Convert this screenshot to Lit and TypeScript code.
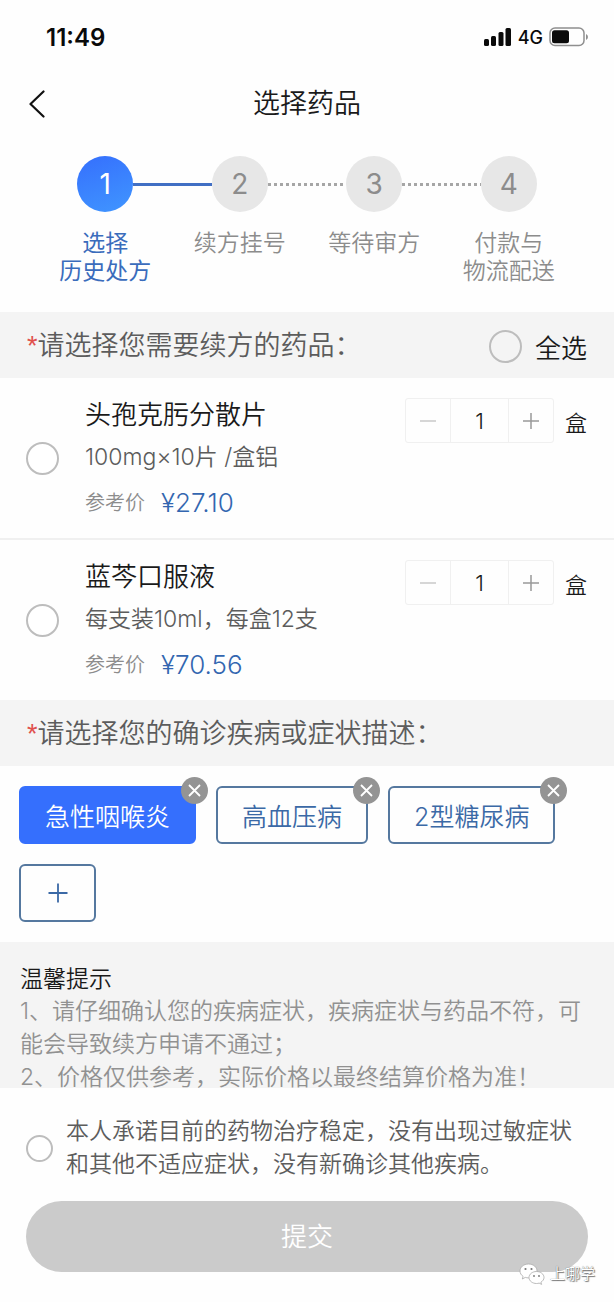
import { LitElement, html, css, nothing } from "lit";
import { customElement, property, state } from "lit/decorators.js";
import { classMap } from "lit/directives/class-map.js";

interface Drug {
  name: string;
  spec: string;
  price: string;
  count: number;
  checked: boolean;
}

const shared = css`
  * {
    box-sizing: border-box;
  }
  button,
  input {
    font: inherit;
    color: inherit;
    margin: 0;
    padding: 0;
    border: 0;
    background: none;
  }
  button {
    cursor: pointer;
  }
  .round {
    appearance: none;
    flex: none;
    width: 33px;
    height: 33px;
    border: 2px solid #bdbdbd;
    border-radius: 50%;
    background: #fff;
  }
  .round:checked {
    border-color: #356ffd;
    background: radial-gradient(#356ffd 50%, #fff 54%);
  }
`;

@customElement("status-bar")
export class StatusBar extends LitElement {
  static styles = css`
    :host {
      display: flex;
      align-items: center;
      justify-content: space-between;
      height: 74px;
      padding: 0 25px 0 46px;
      color: #0a0a0a;
    }
    .time {
      font-size: 24px;
      font-weight: 600;
    }
    .right {
      display: flex;
      align-items: center;
      gap: 6px;
      font-size: 18px;
      font-weight: 500;
    }
    svg {
      display: block;
    }
  `;

  render() {
    return html`
      <span class="time">11:49</span>
      <span class="right">
        <svg width="29" height="20" viewBox="0 0 29 20" fill="#0a0a0a" aria-hidden="true">
          <rect x="1" y="12" width="5" height="7" rx="1.500" />
          <rect x="8" y="9" width="5" height="10" rx="1.500" />
          <rect x="15.500" y="5" width="5" height="14" rx="1.500" />
          <rect x="22.500" y="1" width="5.500" height="18" rx="1.500" />
        </svg>
        <span>4G</span>
        <svg width="40" height="20" viewBox="0 0 40 20" aria-hidden="true">
          <rect x="1" y="1" width="34" height="17.500" rx="5" fill="none" stroke="#8f8f8f" stroke-width="1.500" />
          <rect x="3" y="3.200" width="17" height="13" rx="2.500" fill="#0a0a0a" />
          <path d="M37 7v6q2-1 2-3t-2-3z" fill="#8f8f8f" />
        </svg>
      </span>
    `;
  }
}

@customElement("step-bar")
export class StepBar extends LitElement {
  static styles = css`
    .steps {
      display: flex;
      list-style: none;
      margin: 0;
      padding: 22px 38px 27px;
    }
    .step {
      flex: 1;
      min-width: 0;
      color: #8c8c8c;
    }
    .head {
      display: grid;
      grid-template-columns: 1fr 56px 1fr;
      align-items: center;
    }
    .dot {
      grid-column: 2;
      display: grid;
      place-items: center;
      height: 56px;
      border-radius: 50%;
      background: #e7e7e7;
      font-size: 28px;
      font-weight: 400;
    }
    .line {
      width: 200%;
      height: 3px;
      background: repeating-linear-gradient(90deg, #a6a6a6 0 3px, transparent 3px 6px);
    }
    .label {
      margin-top: 17px;
      font-size: 23px;
      line-height: 28px;
      text-align: center;
      white-space: pre-line;
    }
    .active {
      color: #3a6cbc;
    }
    .active .label {
      font-weight: 400;
    }
    .active .dot {
      background: linear-gradient(160deg, #356ffd, #4096ff);
      color: #fff;
    }
    .active .line {
      background: #416fc4;
    }
  `;

  private labels = ["选择\n历史处方", "续方挂号", "等待审方", "付款与\n物流配送"];

  render() {
    return html`<ol class="steps">
      ${this.labels.map(
        (label, i) => html`<li class=${classMap({ step: true, active: i === 0 })}>
          <div class="head">
            <span class="dot">${i + 1}</span>
            ${i < this.labels.length - 1 ? html`<span class="line"></span>` : nothing}
          </div>
          <div class="label">${label}</div>
        </li>`
      )}
    </ol>`;
  }
}

@customElement("drug-item")
export class DrugItem extends LitElement {
  static styles = [
    shared,
    css`
      :host {
        display: flex;
        align-items: center;
        gap: 26px;
        padding: 19px 27px 19px 26px;
      }
      .info {
        flex: 1;
        min-width: 0;
      }
      .name {
        display: block;
        font-size: 26px;
        line-height: 36px;
        color: #1a1a1a;
      }
      .spec {
        margin-top: 8px;
        font-size: 23px;
        line-height: 32px;
        color: #5c5c5c;
      }
      .price {
        display: flex;
        align-items: center;
        gap: 16px;
        margin-top: 14px;
        line-height: 32px;
        font-size: 20px;
        color: #8c8c8c;
      }
      .amount {
        font-size: 26px;
        color: #3366b0;
      }
      .quantity {
        align-self: flex-start;
        display: flex;
        align-items: center;
        gap: 11px;
        margin-top: 1px;
        font-size: 22px;
        color: #1a1a1a;
      }
      .stepper {
        display: grid;
        grid-template-columns: 44px 59px 44px;
        height: 45px;
        border: 1px solid #f0f0f0;
        border-radius: 3px;
      }
      .stepper button {
        display: grid;
        place-items: center;
        color: #999;
      }
      .stepper button:disabled {
        color: #c8c8c8;
      }
      .count {
        width: 100%;
        min-width: 0;
        border: solid #f0f0f0;
        border-width: 0 1px;
        text-align: center;
      }
    `,
  ];

  @property({ attribute: false }) drug!: Drug;

  private change(patch: Partial<Drug>) {
    this.dispatchEvent(new CustomEvent("drug-change", { detail: patch }));
  }

  render() {
    const d = this.drug;
    return html`
      <input
        class="round"
        id="pick"
        type="checkbox"
        .checked=${d.checked}
        @change=${(e: Event) => this.change({ checked: (e.target as HTMLInputElement).checked })}
      />
      <div class="info">
        <label class="name" for="pick">${d.name}</label>
        <div class="spec">${d.spec}</div>
        <div class="price"><span>参考价</span><span class="amount">¥${d.price}</span></div>
      </div>
      <div class="quantity">
        <div class="stepper">
          <button aria-label="减少" ?disabled=${d.count <= 1} @click=${() => this.change({ count: d.count - 1 })}>
            <svg width="16" height="16" viewBox="0 0 16 16" stroke="currentColor" stroke-width="1.500">
              <path d="M0 8h16" />
            </svg>
          </button>
          <input
            class="count"
            inputmode="numeric"
            aria-label="数量"
            .value=${String(d.count)}
            @change=${(e: Event) => this.change({ count: Math.max(1, Number((e.target as HTMLInputElement).value) || 1) })}
          />
          <button aria-label="增加" @click=${() => this.change({ count: d.count + 1 })}>
            <svg width="16" height="16" viewBox="0 0 16 16" stroke="currentColor" stroke-width="1.500">
              <path d="M0 8h16M8 0v16" />
            </svg>
          </button>
        </div>
        <span>盒</span>
      </div>
    `;
  }
}

@customElement("app-root")
export class AppRoot extends LitElement {
  static styles = [
    shared,
    css`
      :host {
        display: block;
        background: #fefefe;
        color: #1a1a1a;
        font-family: Inter, "Noto Sans CJK SC", sans-serif;
        font-weight: 350;
      }
      .nav {
        display: grid;
        grid-template-columns: 48px 1fr 48px;
        align-items: center;
        height: 60px;
        padding: 0 13px;
      }
      .back {
        display: grid;
        place-items: center;
        height: 48px;
      }
      .title {
        margin: 0;
        font-size: 27px;
        line-height: 36px;
        font-weight: inherit;
        text-align: center;
      }
      .bar {
        display: flex;
        align-items: center;
        justify-content: space-between;
        height: 66px;
        padding: 2px 27px 0;
        background: #f4f4f4;
      }
      .heading {
        margin: 0;
        font-size: 27px;
        line-height: 36px;
        font-weight: inherit;
        color: #5c5c5c;
      }
      .star {
        color: #e0504c;
        font-family: "Liberation Sans", sans-serif;
      }
      .all {
        display: flex;
        align-items: center;
        gap: 13px;
        font-size: 26px;
      }
      .all .round {
        background: transparent;
      }
      .divided {
        border-bottom: 2px solid #f0f0f0;
      }
      .chips {
        display: flex;
        flex-wrap: wrap;
        gap: 20px;
        padding: 20px 19px;
      }
      .chip {
        position: relative;
      }
      .tag,
      .add {
        height: 58px;
        border: 2px solid #55789f;
        border-radius: 6px;
        color: #3b69a6;
      }
      .tag {
        padding: 0 24px;
        font-size: 25px;
      }
      .selected {
        border-color: #356ffd;
        background: #356ffd;
        color: #fff;
      }
      .add {
        display: grid;
        place-items: center;
        width: 77px;
      }
      .remove {
        position: absolute;
        top: -9px;
        right: -12px;
        display: grid;
        place-items: center;
        width: 27px;
        height: 27px;
        border-radius: 50%;
        background: #949494;
        color: #fff;
      }
      .tips {
        padding: 21px 20px 0;
        margin-bottom: -6px;
        background: #f4f4f4;
        font-size: 23px;
        line-height: 33px;
        color: #919191;
      }
      .tips h2 {
        margin: 0;
        font-size: 23px;
        line-height: 32px;
        font-weight: inherit;
        color: #1a1a1a;
      }
      .tips p {
        margin: 0;
      }
      .footer {
        position: relative;
        padding: 27px 26px 30px;
        background: #fefefe;
      }
      .promise {
        display: flex;
        align-items: center;
        gap: 13px;
        font-size: 23px;
        line-height: 33px;
        color: #5c5c5c;
      }
      .promise .round {
        width: 27px;
        height: 27px;
      }
      .submit {
        display: block;
        width: 100%;
        height: 71px;
        margin-top: 20px;
        padding-bottom: 4px;
        border-radius: 36px;
        background: #cbcbcb;
        color: #fff;
        font-size: 26px;
      }
      .mark {
        position: absolute;
        right: 19px;
        bottom: 17px;
        display: flex;
        align-items: center;
        gap: 5px;
        color: #fff;
        font-size: 15px;
        line-height: 20px;
        text-shadow: 0 0 1px #555, 1px 1px 1px #777;
      }
      svg {
        display: block;
      }
    `,
  ];

  @state() private drugs: Drug[] = [
    { name: "头孢克肟分散片", spec: "100mg×10片 /盒铝", price: "27.10", count: 1, checked: false },
    { name: "蓝芩口服液", spec: "每支装10ml，每盒12支", price: "70.56", count: 1, checked: false },
  ];
  @state() private diseases = ["急性咽喉炎", "高血压病", "2型糖尿病"];
  @state() private current = "急性咽喉炎";
  @state() private agreed = false;

  private patch(index: number, patch: Partial<Drug>) {
    this.drugs = this.drugs.map((d, i) => (i === index ? { ...d, ...patch } : d));
  }

  private toggleAll(e: Event) {
    const checked = (e.target as HTMLInputElement).checked;
    this.drugs = this.drugs.map((d) => ({ ...d, checked }));
  }

  render() {
    return html`
      <status-bar></status-bar>
      <header class="nav">
        <button class="back" aria-label="返回">
          <svg width="18" height="28" viewBox="0 0 18 28" fill="none" stroke="#111" stroke-width="2.200">
            <path d="M15.500 1.500L2.500 14l13 12.500" stroke-linecap="round" stroke-linejoin="round" />
          </svg>
        </button>
        <h1 class="title">选择药品</h1>
      </header>
      <step-bar></step-bar>

      <section>
        <div class="bar">
          <h2 class="heading"><span class="star">*</span>请选择您需要续方的药品：</h2>
          <label class="all">
            <input
              class="round"
              type="checkbox"
              .checked=${this.drugs.every((d) => d.checked)}
              @change=${this.toggleAll}
            />全选
          </label>
        </div>
        ${this.drugs.map(
          (drug, i) => html`<drug-item
            class=${classMap({ divided: i < this.drugs.length - 1 })}
            .drug=${drug}
            @drug-change=${(e: CustomEvent<Partial<Drug>>) => this.patch(i, e.detail)}
          ></drug-item>`
        )}
      </section>

      <section>
        <div class="bar">
          <h2 class="heading"><span class="star">*</span>请选择您的确诊疾病或症状描述：</h2>
        </div>
        <div class="chips">
          ${this.diseases.map(
            (name) => html`<div class="chip">
              <button
                class=${classMap({ tag: true, selected: name === this.current })}
                aria-pressed=${name === this.current}
                @click=${() => (this.current = name)}
              >${name}</button>
              <button
                class="remove"
                aria-label="删除${name}"
                @click=${() => (this.diseases = this.diseases.filter((n) => n !== name))}
              >
                <svg width="13" height="13" viewBox="0 0 13 13" stroke="currentColor" stroke-width="1.800">
                  <path d="M1 1l11 11M12 1L1 12" />
                </svg>
              </button>
            </div>`
          )}
          <button class="add" aria-label="添加">
            <svg width="20" height="20" viewBox="0 0 20 20" stroke="currentColor" stroke-width="1.800">
              <path d="M0.500 10h19M10 0.500v19" />
            </svg>
          </button>
        </div>
      </section>

      <section class="tips">
        <h2>温馨提示</h2>
        <p>1、请仔细确认您的疾病症状，疾病症状与药品不符，可能会导致续方申请不通过；</p>
        <p>2、价格仅供参考，实际价格以最终结算价格为准！</p>
      </section>

      <footer class="footer">
        <label class="promise">
          <input
            class="round"
            type="checkbox"
            .checked=${this.agreed}
            @change=${(e: Event) => (this.agreed = (e.target as HTMLInputElement).checked)}
          />
          <span>本人承诺目前的药物治疗稳定，没有出现过敏症状和其他不适应症状，没有新确诊其他疾病。</span>
        </label>
        <button class="submit">提交</button>
        <div class="mark">
          <svg width="26" height="22" viewBox="0 0 26 22" fill="#fff" stroke="#aaa" stroke-width="0.800">
            <path d="M9.500 1C4.500 1 1 4.200 1 8c0 2.200 1.200 4.100 3.100 5.400L3.300 16l3-1.600c1 .3 2.100.5 3.200.5 5 0 8.500-3.100 8.500-6.900S14.500 1 9.500 1z" />
            <path d="M17.500 8.500c-4.200 0-7.500 2.700-7.500 6s3.300 6 7.500 6c.9 0 1.800-.1 2.600-.4l2.500 1.300-.7-2.200c1.900-1.100 3.100-2.800 3.100-4.700 0-3.300-3.300-6-7.500-6z" />
            <g fill="#777" stroke="none">
              <circle cx="6.500" cy="6" r="1.100" />
              <circle cx="12.500" cy="6" r="1.100" />
              <circle cx="15" cy="13" r="0.900" />
              <circle cx="20" cy="13" r="0.900" />
            </g>
          </svg>
          <span>上哪学</span>
        </div>
      </footer>
    `;
  }
}
